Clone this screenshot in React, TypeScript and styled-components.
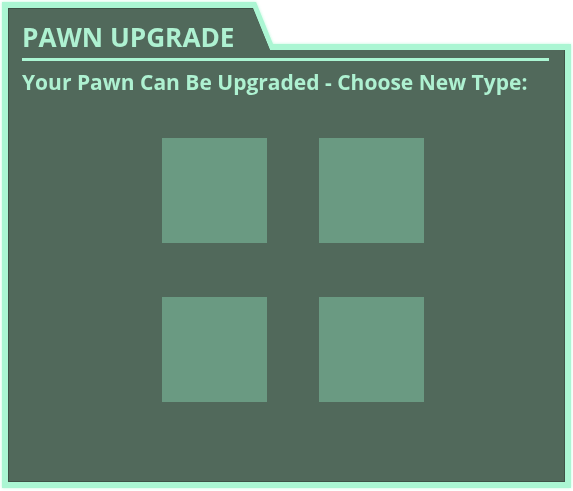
import styled, { createGlobalStyle } from "styled-components";

const colors = {
	mint: "#abf6d3",
	mintText: "#aef1d1",
	panel: "#51695b",
	edge: "#3f5247",
	tile: "#6a9a82",
	page: "#ffffff",
};

const GlobalStyle = createGlobalStyle`
	html, body {
		margin: 0;
		padding: 0;
		background: ${colors.page};
	}
	body {
		font-family: "Open Sans", "Liberation Sans", sans-serif;
	}
`;

const choices = ["Queen", "Rook", "Bishop", "Knight"];

export default function App() {
	return (
		<>
			<GlobalStyle />
			<Page>
				<Glow>
					<Border>
						<Edge>
							<Panel>
								<Title>PAWN UPGRADE</Title>
								<Rule />
								<Subtitle>
									Your Pawn Can Be Upgraded - Choose New Type:
								</Subtitle>
								<Grid>
									{choices.map((name) => (
										<Tile key={name} aria-label={name} />
									))}
								</Grid>
							</Panel>
						</Edge>
					</Border>
				</Glow>
			</Page>
		</>
	);
}

const Page = styled.div`
	width: 573px;
	height: 491px;
	padding: 2px;
	box-sizing: border-box;
`;

const Glow = styled.div`
	width: 569px;
	height: 486px;
	filter: drop-shadow(0 0 1.5px rgba(171, 246, 211, 0.8));
`;

const Border = styled.div`
	width: 100%;
	height: 100%;
	box-sizing: border-box;
	padding: 6px;
	background: ${colors.mint};
	clip-path: polygon(0 0, 254px 0, 271px 42px, 100% 42px, 100% 100%, 0 100%);
`;

const Edge = styled.div`
	width: 100%;
	height: 100%;
	box-sizing: border-box;
	padding: 1px;
	background: ${colors.edge};
	clip-path: polygon(0 0, 245px 0, 262px 42px, 100% 42px, 100% 100%, 0 100%);
`;

const Panel = styled.div`
	width: 100%;
	height: 100%;
	box-sizing: border-box;
	padding: 13px 14px 0 13px;
	background: ${colors.panel};
	clip-path: polygon(0 0, 244px 0, 261px 41px, 100% 41px, 100% 100%, 0 100%);
	display: flex;
	flex-direction: column;
`;

const Title = styled.h1`
	margin: 0;
	font-size: 26.2px;
	line-height: 30px;
	font-weight: 700;
	color: ${colors.mintText};
`;

const Rule = styled.div`
	margin-top: 6px;
	width: 527px;
	height: 3px;
	background: ${colors.mint};
`;

const Subtitle = styled.p`
	margin: 8px 0 0;
	font-size: 21px;
	line-height: 26px;
	font-weight: 700;
	color: ${colors.mintText};
`;

const Grid = styled.div`
	display: grid;
	grid-template-columns: repeat(2, 105px);
	grid-auto-rows: 105px;
	column-gap: 52px;
	row-gap: 54px;
	margin: 43px 0 0 140px;
`;

const Tile = styled.div`
	background: ${colors.tile};
	cursor: pointer;
`;
